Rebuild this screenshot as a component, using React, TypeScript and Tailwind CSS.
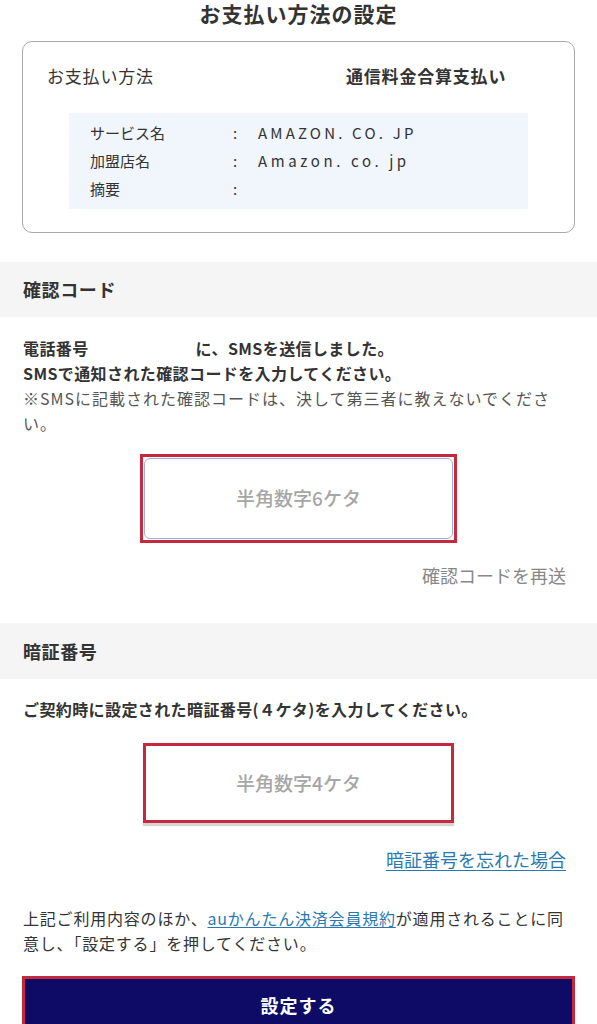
export default function App() {
  const font = { fontFamily: '"Noto Sans CJK JP", "Noto Sans", sans-serif' };
  return (
    <div style={font} className="w-[597px] h-[1024px] overflow-hidden bg-white text-[#333]">
      {/* title */}
      <h1 className="pt-px text-center text-[21px] font-bold leading-[24px] tracking-[1px]">お支払い方法の設定</h1>

      {/* payment summary card */}
      <div className="mx-[22px] mt-[16px] rounded-[10px] border-[1.5px] border-[#a9a9a9] pt-[22px] pb-[23px]">
        <div className="flex pl-[24px] text-[17px] leading-[24px] tracking-[0.8px]">
          <span className="w-[299px]">お支払い方法</span>
          <span className="font-bold">通信料金合算支払い</span>
        </div>
        <div className="mx-[46px] mt-[25px] bg-[#f1f5fc] py-[6px] pl-[21px] text-[15px] leading-[28px]">
          <div className="flex">
            <span className="w-[143px]">サービス名</span>
            <span className="w-[25px]">:</span>
            <span className="tracking-[3.2px]">AMAZON.&nbsp;CO.&nbsp;JP</span>
          </div>
          <div className="flex">
            <span className="w-[143px]">加盟店名</span>
            <span className="w-[25px]">:</span>
            <span className="tracking-[3.6px]">Amazon.&nbsp;co.&nbsp;jp</span>
          </div>
          <div className="flex">
            <span className="w-[143px]">摘要</span>
            <span className="w-[25px]">:</span>
          </div>
        </div>
      </div>

      {/* confirmation code */}
      <div className="mt-[29px] flex h-[55px] items-center bg-[#f5f5f6] px-[23px] text-[18px] font-bold tracking-[0.6px]">
        確認コード
      </div>
      <div className="mt-[19px] pl-[23px] pr-[40px] text-[16px] leading-[25px] tracking-[0.4px]">
        <p className="font-bold">
          電話番号<span className="inline-block w-[107px]"></span>に、SMSを送信しました。
        </p>
        <p className="font-bold">SMSで通知された確認コードを入力してください。</p>
        <p className="tracking-[1px] text-[#555]">※SMSに記載された確認コードは、決して第三者に教えないでください。</p>
      </div>
      <div className="mt-[18px] flex justify-center">
        <div className="h-[89px] w-[317px] border-[3px] border-[#c6283d] p-px">
          <div className="flex h-full items-center justify-center rounded-[6px] border border-[#9db0d8] text-[19px] font-medium text-[#a6a6a6]">
            半角数字6ケタ
          </div>
        </div>
      </div>
      <div className="mt-[20px] pr-[31px] text-right text-[18px] leading-[25px] text-[#888]">確認コードを再送</div>

      {/* PIN */}
      <div className="mt-[35px] flex h-[56px] items-center bg-[#f5f5f6] px-[23px] text-[18px] font-bold tracking-[0.6px]">
        暗証番号
      </div>
      <p className="mt-[18px] px-[23px] text-[16px] font-bold leading-[25px] tracking-[0.4px]">
        ご契約時に設定された暗証番号(４ケタ)を入力してください。
      </p>
      <div className="mt-[21px] flex justify-center">
        <div className="h-[80px] w-[311px] border-[3px] border-[#c6283d] bg-white shadow-[0_3px_1px_#d4d4d4]">
          <div className="flex h-full items-center justify-center text-[19px] font-medium text-[#a6a6a6]">半角数字4ケタ</div>
        </div>
      </div>
      <div className="mt-[24px] pr-[31px] text-right text-[18px] leading-[25px]">
        <a className="text-[#2a78b2] underline underline-offset-[3px]">暗証番号を忘れた場合</a>
      </div>

      <p className="mt-[34px] pl-[23px] pr-[30px] text-[16px] leading-[25px] tracking-[0.8px]">
        上記ご利用内容のほか、<a className="text-[#2a78b2] underline underline-offset-[2px]">auかんたん決済会員規約</a>が適用されることに同意し、「設定する」を押してください。
      </p>

      <div className="mx-[22px] mt-[20px] flex h-[58px] items-center justify-center border-[3px] border-[#c6283d] bg-[#0d0b66] text-[18px] font-bold tracking-[1px] text-white">
        設定する
      </div>
    </div>
  );
}
